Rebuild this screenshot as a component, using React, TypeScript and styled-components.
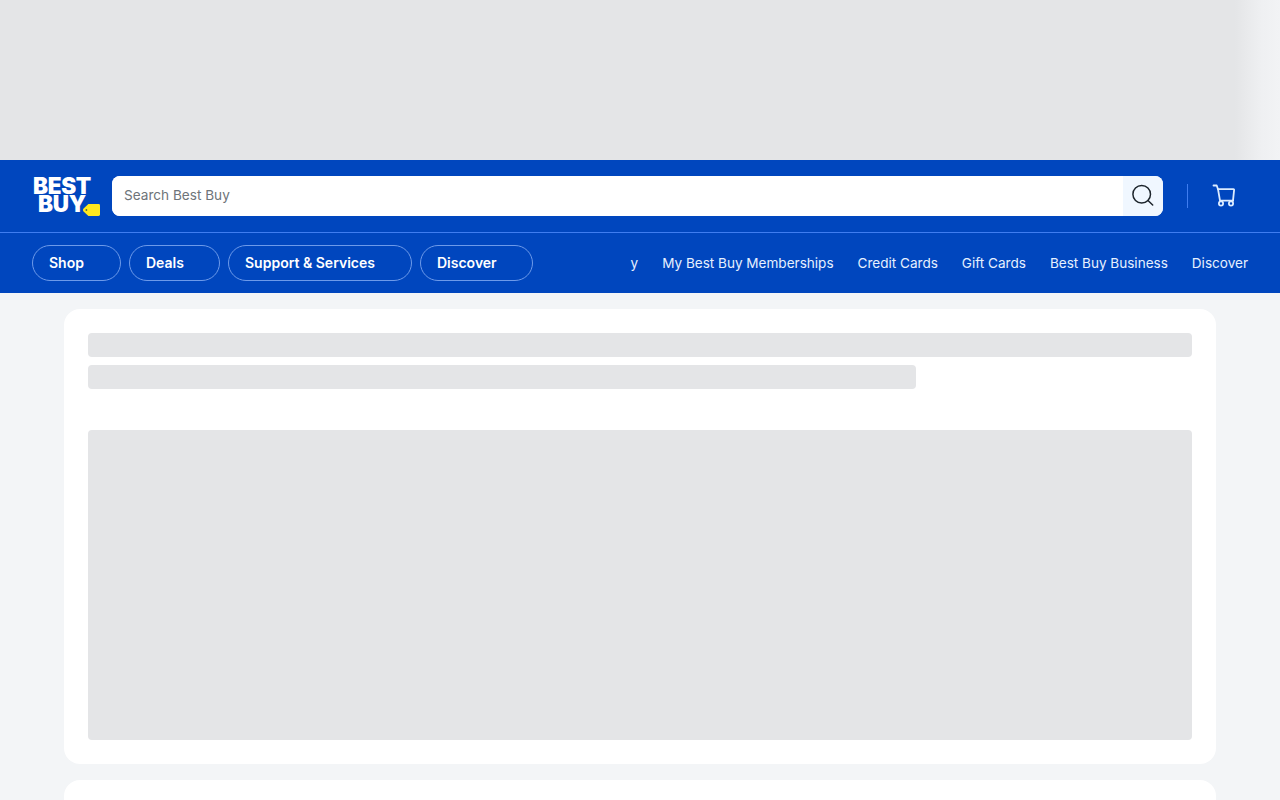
import styled, { createGlobalStyle } from 'styled-components'

const primaryNav = [
  { label: 'Shop', width: 89 },
  { label: 'Deals', width: 91 },
  { label: 'Support & Services', width: 184 },
  { label: 'Discover', width: 113 }
]

const secondaryNav = ['y', 'My Best Buy Memberships', 'Credit Cards', 'Gift Cards', 'Best Buy Business', 'Discover']

export default function App() {
  return (
    <Page>
      <GlobalStyle />
      <AdBanner />
      <Header>
        <TopRow>
          <Logo aria-label="Best Buy">
            <LogoText>
              BEST
              <br />
              BUY
            </LogoText>
            <LogoTag viewBox="0 0 17 12">
              <path d="M5.4 0h10.2A1.4 1.4 0 0 1 17 1.4v9.2a1.4 1.4 0 0 1-1.4 1.4H5.4L.6 7.4a2 2 0 0 1 0-2.8z" fill="#ffe81e" />
              <circle cx="3.4" cy="6" r="0.9" fill="#5a6a3a" />
            </LogoTag>
          </Logo>
          <SearchBar>
            <SearchInput placeholder="Search Best Buy" />
            <SearchButton type="button" aria-label="Search">
              <svg width="24" height="24" viewBox="0 0 24 24" fill="none" stroke="#1d252c" strokeWidth="1.5" strokeLinecap="round">
                <circle cx="10.7" cy="10.3" r="8.8" />
                <path d="M17 16.5l4.7 4.5" />
              </svg>
            </SearchButton>
          </SearchBar>
          <Divider />
          <CartLink aria-label="Cart">
            <svg width="24" height="24" viewBox="0 0 24 24" fill="none" stroke="#dcecff" strokeWidth="1.8" strokeLinecap="round" strokeLinejoin="round">
              <path d="M1.5 1.5h3.2L6 5.2l2 11.5h13" />
              <path d="M6 5.2h15.4a.7.7 0 0 1 .7.8L21 16.7" />
              <circle cx="9" cy="19.5" r="2.1" />
              <circle cx="19" cy="19.5" r="2.1" />
            </svg>
          </CartLink>
        </TopRow>
        <NavRow>
          <PrimaryNav>
            {primaryNav.map((item) => (
              <NavPill key={item.label} $width={item.width}>
                {item.label}
              </NavPill>
            ))}
          </PrimaryNav>
          <SecondaryNav>
            {secondaryNav.map((item) => (
              <NavLink key={item}>{item}</NavLink>
            ))}
          </SecondaryNav>
        </NavRow>
      </Header>
      <Main>
        <Card>
          <SkeletonLine />
          <SkeletonLine $short />
          <SkeletonHero />
        </Card>
        <NextCard />
      </Main>
    </Page>
  )
}

const GlobalStyle = createGlobalStyle`
  html, body {
    margin: 0;
    padding: 0;
    background: #f3f5f7;
  }
  * {
    box-sizing: border-box;
  }
`
const Page = styled.div`
  height: 800px;
  overflow: hidden;
  font-family: Inter, 'Noto Sans', 'Liberation Sans', sans-serif;
`
const AdBanner = styled.div`
  height: 160px;
  background: linear-gradient(to right, #e4e5e7 0, #e4e5e7 1235px, #eff0f2 1262px, #f2f3f5 1280px);
`
const Header = styled.header`
  background: #0046be;
  color: #fff;
`
const TopRow = styled.div`
  height: 73px;
  padding: 16px 0 16px 32px;
  display: flex;
  align-items: flex-start;
  border-bottom: 1px solid #3f7df0;
`
const Logo = styled.div`
  position: relative;
  width: 68px;
  height: 40px;
  margin-right: 12px;
`
const LogoText = styled.div`
  width: 60px;
  padding-top: 1px;
  text-align: center;
  font-weight: 900;
  font-size: 22.5px;
  line-height: 18px;
  letter-spacing: -0.3px;
  color: #fff;
`
const LogoTag = styled.svg`
  position: absolute;
  right: 0;
  bottom: 0;
  width: 17px;
  height: 12px;
`
const SearchBar = styled.div`
  width: 1051px;
  height: 40px;
  display: flex;
  background: #fff;
  border-radius: 8px;
  overflow: hidden;
`
const SearchInput = styled.input`
  flex: 1;
  min-width: 0;
  border: 0;
  outline: 0;
  padding: 0 12px 3px;
  font-family: inherit;
  font-size: 13.6px;
  color: #1d252c;
  &::placeholder {
    color: #6e7479;
    opacity: 1;
  }
`
const SearchButton = styled.button`
  width: 40px;
  height: 40px;
  padding: 0;
  border: 0;
  background: #f0f7ff;
  display: flex;
  align-items: center;
  justify-content: center;
`
const Divider = styled.div`
  width: 1px;
  height: 24px;
  margin: 8px 24px 0;
  background: #3f7df0;
`
const CartLink = styled.a`
  display: flex;
  width: 24px;
  height: 24px;
  margin-top: 8px;
`
const NavRow = styled.nav`
  height: 60px;
  padding: 12px 32px;
  display: flex;
  align-items: flex-start;
  justify-content: space-between;
`
const PrimaryNav = styled.div`
  display: flex;
  gap: 8px;
`
const NavPill = styled.button<{ $width: number }>`
  width: ${(p) => p.$width}px;
  height: 36px;
  padding: 0 0 2px 16px;
  text-align: left;
  background: transparent;
  border: 1px solid #6d9aea;
  border-radius: 18px;
  color: #fff;
  font-family: inherit;
  font-size: 14px;
  font-weight: 600;
`
const SecondaryNav = styled.div`
  display: flex;
  align-items: center;
  gap: 24px;
  height: 36px;
`
const NavLink = styled.a`
  font-size: 13.55px;
  color: #e6f0ff;
  white-space: nowrap;
`
const Main = styled.main`
  padding: 16px 64px 0;
  display: flex;
  flex-direction: column;
  gap: 16px;
`
const Card = styled.section`
  height: 455px;
  padding: 24px;
  background: #fff;
  border-radius: 16px;
`
const NextCard = styled(Card)`
  height: 300px;
`
const SkeletonLine = styled.div<{ $short?: boolean }>`
  width: ${(p) => (p.$short ? '75%' : '100%')};
  height: 24px;
  margin-bottom: 8px;
  background: #e4e5e7;
  border-radius: 4px;
`
const SkeletonHero = styled.div`
  height: 310.5px;
  margin-top: 40.5px;
  background: #e4e5e7;
  border-radius: 4px;
`
